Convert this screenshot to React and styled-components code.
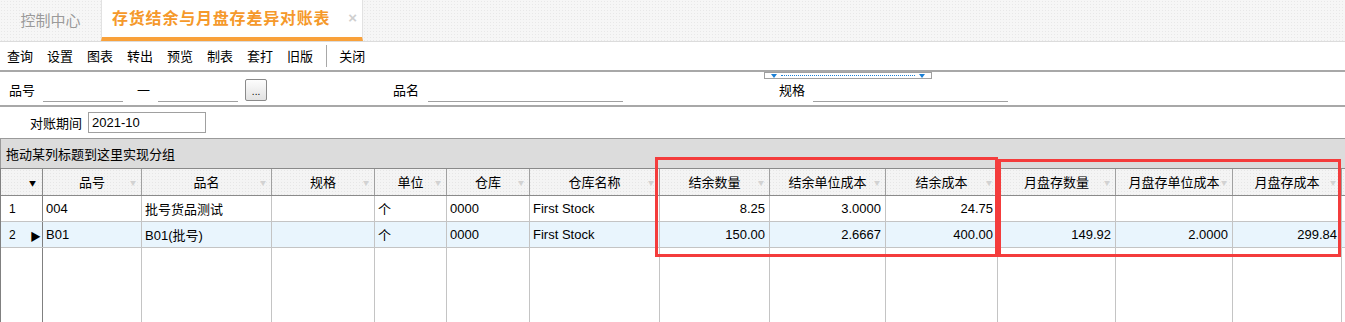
import React from "react"
import styled, { createGlobalStyle } from "styled-components"

const GlobalStyle = createGlobalStyle`
    html, body { margin: 0; padding: 0; background: #fff; }
    body {
        font-family: "Liberation Sans", "Noto Sans CJK SC", sans-serif;
        font-size: 13px;
        color: #000;
    }
`

const widths = [42, 99, 130, 103, 72, 83, 130, 110, 116, 112, 118, 117, 109]
const template = widths.map(w => w + "px").join(" ") + " 1fr"

const headers = [
    "品号", "品名", "规格", "单位", "仓库", "仓库名称",
    "结余数量", "结余单位成本", "结余成本", "月盘存数量", "月盘存单位成本", "月盘存成本",
]

const rows = [
    { no: "1", selected: false, cells: ["004", "批号货品测试", "", "个", "0000", "First Stock", "8.25", "3.0000", "24.75", "", "", ""] },
    { no: "2", selected: true, cells: ["B01", "B01(批号)", "", "个", "0000", "First Stock", "150.00", "2.6667", "400.00", "149.92", "2.0000", "299.84"] },
]

const toolItems = ["查询", "设置", "图表", "转出", "预览", "制表", "套打", "旧版"]

export default function App() {
    return (
        <Page>
            <GlobalStyle />
            <TabBar>
                <Tab>控制中心</Tab>
                <Tab active>
                    存货结余与月盘存差异对账表
                    <Close>×</Close>
                </Tab>
            </TabBar>
            <Toolbar>
                {toolItems.map(t => <ToolItem key={t}>{t}</ToolItem>)}
                <ToolSep />
                <ToolItem>关闭</ToolItem>
            </Toolbar>
            <FilterRow>
                <Label>品号</Label>
                <LineInput width={80} gap={8} />
                <Label gap={14}>一</Label>
                <LineInput width={80} gap={8} />
                <DotsButton>...</DotsButton>
                <Label gap={126}>品名</Label>
                <LineInput width={195} gap={9} />
                <Label gap={156}>规格</Label>
                <LineInput width={195} gap={8} />
                <Splitter>
                    <Arrow />
                    <DotLine />
                    <Arrow />
                </Splitter>
            </FilterRow>
            <PeriodRow>
                <Label>对账期间</Label>
                <BoxInput>2021-10</BoxInput>
            </PeriodRow>
            <GroupPanel>拖动某列标题到这里实现分组</GroupPanel>
            <Grid>
                <HeaderRow>
                    <HeadCell first><HeadMark>▼</HeadMark></HeadCell>
                    {headers.map(h => (
                        <HeadCell key={h}>
                            {h}
                            <FilterMark>▼</FilterMark>
                        </HeadCell>
                    ))}
                    <HeadCell />
                </HeaderRow>
                {rows.map(r => (
                    <DataRow key={r.no} selected={r.selected}>
                        <IndexCell>
                            {r.no}
                            {r.selected && <RowPointer>▶</RowPointer>}
                        </IndexCell>
                        {r.cells.map((c, i) => (
                            <Cell key={i} numeric={i >= 6}>{c}</Cell>
                        ))}
                        <Cell />
                    </DataRow>
                ))}
                <FillerRow>
                    <IndexCell />
                    {headers.map(h => <Cell key={h} />)}
                    <Cell />
                </FillerRow>
            </Grid>
            <Mark left={655} top={157} width={343} height={100} />
            <Mark left={998} top={159} width={343} height={98} />
        </Page>
    )
}

const Page = styled.div`
    position: relative;
    width: 1345px;
    height: 322px;
    overflow: hidden;
    display: flex;
    flex-direction: column;
`

const TabBar = styled.div`
    height: 42px;
    flex: none;
    display: flex;
    box-sizing: border-box;
    border-bottom: 1px solid #dcdcdc;
    background-color: #f6f6f6;
    background-image: radial-gradient(#e8e8e8 0.6px, transparent 0.8px);
    background-size: 3px 3px;
`

const Tab = styled.div`
    position: relative;
    box-sizing: border-box;
    display: flex;
    align-items: center;
    height: 41px;
    font-family: "Noto Sans CJK SC", sans-serif;
    ${props => props.active ? `
        width: 262px;
        padding: 0 0 3px 10px;
        background: #fff;
        color: #f5992b;
        font-size: 16px;
        font-weight: 700;
        letter-spacing: 0.8px;
        border-left: 1px solid #e2e2e2;
        border-right: 1px solid #e2e2e2;
        border-bottom: 4px solid #f9a13a;
    ` : `
        width: 101px;
        justify-content: center;
        color: #9a9a9a;
        font-size: 15px;
        padding-bottom: 2px;
    `}
`

const Close = styled.span`
    position: absolute;
    right: 5px;
    top: 9px;
    font-family: "Liberation Sans", sans-serif;
    font-size: 15px;
    color: #cfcfcf;
    font-weight: 700;
    letter-spacing: 0;
`

const Toolbar = styled.div`
    height: 30px;
    flex: none;
    box-sizing: border-box;
    display: flex;
    align-items: center;
    padding: 0 0 1px 7px;
    gap: 14px;
    border-bottom: 2px solid #a8a8a8;
    font-family: "Noto Sans CJK SC", sans-serif;
`

const ToolItem = styled.span`
    font-size: 13px;
    line-height: 16px;
`

const ToolSep = styled.span`
    width: 1px;
    height: 22px;
    margin: 0 -2px 0 -1px;
    background: #a8a8a8;
`

const FilterRow = styled.div`
    position: relative;
    height: 35px;
    flex: none;
    box-sizing: border-box;
    display: flex;
    align-items: center;
    padding: 3px 0 0 9px;
    border-bottom: 2px solid #a8a8a8;
`

const Label = styled.span`
    margin-left: ${props => props.gap ?? 0}px;
    font-family: "Noto Sans CJK SC", sans-serif;
    font-size: 13px;
    line-height: 16px;
    white-space: nowrap;
`

const LineInput = styled.span`
    width: ${props => props.width}px;
    margin-left: ${props => props.gap}px;
    height: 20px;
    align-self: flex-end;
    margin-bottom: 3px;
    border-bottom: 1px solid #a0a0a0;
`

const DotsButton = styled.span`
    margin-left: 7px;
    width: 22px;
    height: 22px;
    box-sizing: border-box;
    border: 1px solid #8a8a8a;
    border-radius: 2px;
    background: linear-gradient(#fdfdfd, #e2e2e2);
    display: flex;
    align-items: center;
    justify-content: center;
    font-size: 10px;
    line-height: 10px;
    padding-top: 4px;
`

const Splitter = styled.div`
    position: absolute;
    left: 764px;
    top: 0;
    width: 168px;
    height: 7px;
    box-sizing: border-box;
    border: 1px solid #a0a0a0;
    background: #fff;
    display: flex;
    align-items: center;
    padding: 0 6px;
    gap: 4px;
`

const Arrow = styled.span`
    width: 0;
    height: 0;
    border-left: 3px solid transparent;
    border-right: 3px solid transparent;
    border-top: 4px solid #1a7fd6;
`

const DotLine = styled.span`
    flex: 1;
    border-top: 1px dotted #1a7fd6;
`

const PeriodRow = styled.div`
    height: 31px;
    flex: none;
    box-sizing: border-box;
    display: flex;
    align-items: center;
    padding-left: 30px;
    gap: 6px;
`

const BoxInput = styled.span`
    width: 118px;
    height: 21px;
    box-sizing: border-box;
    border: 1px solid #a0a0a0;
    display: flex;
    align-items: center;
    padding-left: 3px;
    font-size: 13px;
`

const GroupPanel = styled.div`
    height: 30px;
    flex: none;
    box-sizing: border-box;
    display: flex;
    align-items: center;
    padding: 0 0 1px 5px;
    background: #dcdcdc;
    border-top: 1px solid #9a9a9a;
    border-left: 1px solid #9a9a9a;
    font-family: "Noto Sans CJK SC", sans-serif;
    font-size: 13px;
`

const Grid = styled.div`
    flex: 1;
    display: flex;
    flex-direction: column;
    border-left: 1px solid #808080;
`

const HeaderRow = styled.div`
    display: grid;
    grid-template-columns: ${template};
    height: 28px;
    box-sizing: border-box;
    border-top: 1px solid #8a8a8a;
    border-bottom: 1px solid #8a8a8a;
    background-color: #f4f4f4;
    background-image: radial-gradient(#e6e6e6 0.6px, transparent 0.8px);
    background-size: 3px 3px;
`

const HeadCell = styled.div`
    position: relative;
    display: flex;
    align-items: center;
    justify-content: center;
    box-sizing: border-box;
    border-right: 1px solid ${props => props.first ? "#8a8a8a" : "#a0a0a0"};
    font-family: "Noto Sans CJK SC", sans-serif;
    font-size: 13px;
    padding-bottom: 1px;
    &:last-child { border-right: 0; }
`

const HeadMark = styled.span`
    position: absolute;
    right: 6px;
    top: 9px;
    font-size: 7px;
    color: #000;
`

const FilterMark = styled.span`
    position: absolute;
    right: 5px;
    top: 9px;
    font-size: 6px;
    color: #d2d2d2;
`

const DataRow = styled.div`
    display: grid;
    grid-template-columns: ${template};
    height: 26px;
    box-sizing: border-box;
    border-bottom: 1px solid #c4c4c4;
    background: ${props => props.selected ? "#e9f5fd" : "#fff"};
`

const FillerRow = styled.div`
    flex: 1;
    display: grid;
    grid-template-columns: ${template};
    background: #fff;
`

const Cell = styled.div`
    display: flex;
    align-items: center;
    justify-content: ${props => props.numeric ? "flex-end" : "flex-start"};
    box-sizing: border-box;
    padding: 0 4px 0 3px;
    border-right: 1px solid #c4c4c4;
    font-size: 13px;
    white-space: nowrap;
    &:last-child { border-right: 0; }
`

const IndexCell = styled.div`
    position: relative;
    display: flex;
    align-items: center;
    box-sizing: border-box;
    padding: 0 0 0 8px;
    border-right: 1px solid #808080;
    font-size: 12px;
`

const RowPointer = styled.span`
    position: absolute;
    left: 29px;
    top: 6px;
    font-size: 11px;
`

const Mark = styled.div`
    position: absolute;
    left: ${props => props.left}px;
    top: ${props => props.top}px;
    width: ${props => props.width}px;
    height: ${props => props.height}px;
    box-sizing: border-box;
    border: 3px solid #f43c3c;
    pointer-events: none;
`
